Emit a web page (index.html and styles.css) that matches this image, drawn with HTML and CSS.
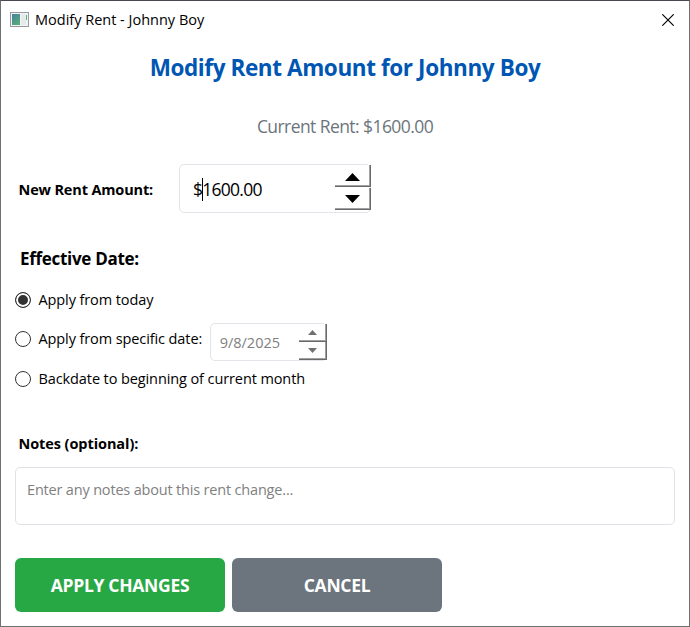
FILE: index.html
```html
<!DOCTYPE html>
<html lang="en">
<head>
<meta charset="utf-8">
<title>Modify Rent - Johnny Boy</title>
<link rel="stylesheet" href="styles.css">
</head>
<body>
<div class="window">
  <header class="titlebar">
    <svg class="app-icon" width="19" height="15" viewBox="0 0 19 15">
      <defs><linearGradient id="g" x1="0" y1="0" x2="0.6" y2="1"><stop offset="0" stop-color="#4a7fa0"/><stop offset="1" stop-color="#55ab78"/></linearGradient></defs>
      <rect x=".5" y=".5" width="18" height="14" fill="#f1f3f4" stroke="#969a9e"/>
      <rect x="2" y="2" width="8" height="11" fill="url(#g)"/>
      <rect x="11" y="2" width="5" height="11" fill="#e6eaeb"/>
      <path d="M16 3h1v5h-1z" fill="#62b184"/>
    </svg>
    <span class="caption">Modify Rent - Johnny Boy</span>
    <svg class="close" width="12" height="12" viewBox="0 0 12 12"><path d="M.3.3 11.7 11.7M11.7.3.3 11.7" stroke="#000" stroke-width="1.15"/></svg>
  </header>
  <main>
    <h1><span>Modify Rent Amount for Johnny Boy</span></h1>
    <p class="current"><span>Current Rent: $1600.00</span></p>
    <div class="amount-row">
      <label class="label amount-label">New Rent Amount:</label>
      <div class="spin spin-lg">
        <span class="value">$<i class="caret"></i>1600.00</span>
        <div class="steps">
          <div class="step"><svg width="15" height="8"><path d="M0 8 7.5 0 15 8z"/></svg></div>
          <div class="step"><svg width="15" height="8"><path d="M0 0H15L7.5 8z"/></svg></div>
        </div>
      </div>
    </div>
    <h2>Effective Date:</h2>
    <div class="option"><i class="radio checked"></i><span class="text">Apply from today</span></div>
    <div class="option dated"><i class="radio"></i><span class="text">Apply from specific date:</span>
      <div class="spin spin-sm">
        <span class="value">9/8/2025</span>
        <div class="steps">
          <div class="step"><svg width="9" height="5"><path d="M0 5 4.5 0 9 5z"/></svg></div>
          <div class="step"><svg width="9" height="5"><path d="M0 0H9L4.5 5z"/></svg></div>
        </div>
      </div>
    </div>
    <div class="option"><i class="radio"></i><span class="text">Backdate to beginning of current month</span></div>
    <div class="label notes-label">Notes (optional):</div>
    <div class="notes"><span>Enter any notes about this rent change...</span></div>
    <div class="actions">
      <div class="btn apply"><span>APPLY CHANGES</span></div>
      <div class="btn cancel"><span>CANCEL</span></div>
    </div>
  </main>
</div>
</body>
</html>
```
FILE: styles.css
```css
* { box-sizing: border-box; }
body { margin: 0; font-family: "Open Sans", "Noto Sans", sans-serif; color: #000; background: #fff; white-space: nowrap; }
.window { width: 690px; height: 627px; border: 1px solid #6f7072; border-top-color: #4c4554; overflow: hidden; }
.titlebar { height: 37px; display: flex; align-items: center; padding: 0 15px 0 9px; }
.caption { font-size: 14.5px; margin-left: 6px; flex: 1; letter-spacing: 0; }
main { padding: 0 14px; }
h1 { margin: 0; height: 60px; line-height: 60px; text-align: center; font-size: 22.5px; font-weight: 700; color: #0056b3; letter-spacing: -.4px; }
.current { margin: 0; height: 58px; line-height: 56px; text-align: center; font-size: 17.5px; color: #6c757d; letter-spacing: -.57px; }
.amount-row { display: flex; align-items: center; margin-top: 8px; height: 49px; }
.label { font-size: 14.5px; font-weight: 700; letter-spacing: -.15px; }
.amount-label { width: 164px; padding: 2px 0 0 3.5px; }
.spin { display: flex; border: 1px solid #e1e4e8; border-radius: 5px; align-items: center; }
.spin .value { flex: 1; }
.spin-lg { width: 192px; height: 49px; padding-left: 13px; font-size: 17.5px; }
.spin-lg .value { letter-spacing: -.75px; }
.caret { display: inline-block; width: 1px; height: 23px; background: #000; vertical-align: -5px; margin-right: -1px; }
.steps { align-self: flex-start; display: flex; flex-direction: column; flex: none; }
.spin-lg .steps { width: 36px; margin-right: 0; }
.step { background: #fff; border-right: 1px solid #696969; border-bottom: 1px solid #696969; box-shadow: inset -1px -1px 0 #a0a0a0; display: flex; align-items: center; justify-content: center; }
.spin-lg .steps { margin-right: -1px; }
.spin-lg .step { height: 22px; padding-top: 3px; }
.spin-lg .step + .step { padding-top: 0; margin-top: 1px; }
h2 { margin: 30px 0 0; padding-left: 5px; height: 32px; line-height: 32px; font-size: 17px; font-weight: 700; letter-spacing: -.3px; }
.option { height: 40px; display: flex; align-items: center; font-size: 14.5px; letter-spacing: -.1px; }
.option .text { margin-top: -2px; }
h2 + .option { margin-top: 5px; height: 39px; }
h2 + .option .text { margin-top: 0; }
.radio { width: 16px; height: 16px; border: 1px solid #333; border-radius: 50%; margin-right: 7.5px; flex: none; }
.checked { background: #333; border-color: #333; box-shadow: inset 0 0 0 2px #fff; }
.dated .spin { margin: 6px 0 0 7.5px; }
.spin-sm { width: 117px; height: 38px; padding-left: 9px; color: #808080; fill: #707070; letter-spacing: 0; }
.spin-sm .steps { width: 28px; margin-right: -1px; }
.spin-sm .step { height: 18px; }
.notes-label { margin-top: 30px; height: 30px; line-height: 30px; padding-left: 3.5px; letter-spacing: -.08px; }
.notes { margin-top: 8px; width: 660px; height: 58px; border: 1px solid #dfe2e6; border-radius: 5px; padding: 0 11px; line-height: 44px; font-size: 14.5px; color: #808080; letter-spacing: -.18px; }
.actions { display: flex; gap: 7px; margin-top: 33px; }
.btn { width: 210px; height: 54px; border-radius: 6px; color: #fff; font-size: 17.5px; font-weight: 700; line-height: 54px; text-align: center; letter-spacing: -.3px; }
.apply { background: #28a745; }
.cancel { background: #6c757d; }
```
